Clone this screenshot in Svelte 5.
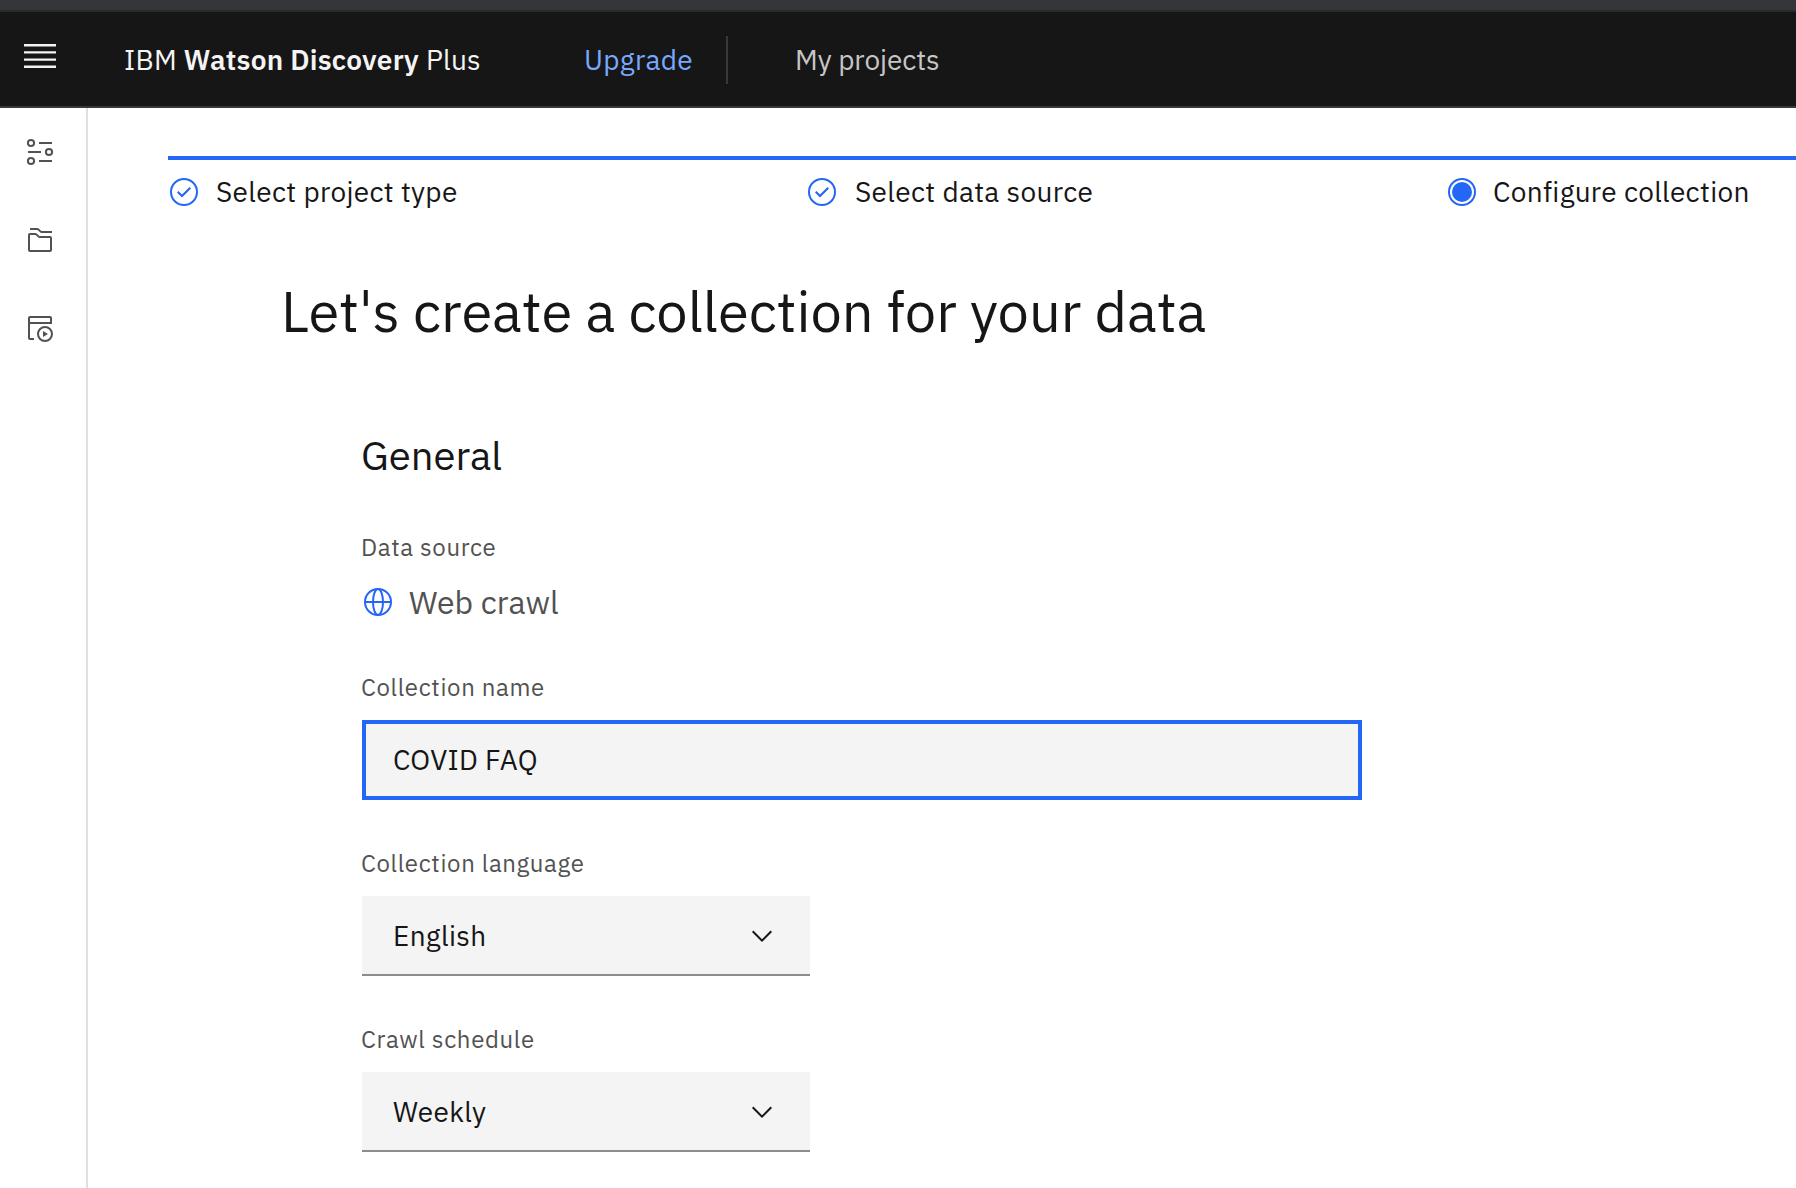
<script>
  const steps = [
    { label: 'Select project type', done: true },
    { label: 'Select data source', done: true },
    { label: 'Configure collection', done: false }
  ];
  const selects = [
    { label: 'Collection language', value: 'English' },
    { label: 'Crawl schedule', value: 'Weekly' }
  ];
  let name = $state('COVID FAQ');
</script>

<div class="page">
  <div class="strip"></div>
  <header>
    <button class="menu" aria-label="Open menu">
      <svg width="40" height="40" viewBox="0 0 20 20"><path d="M2 14.8H18V16H2zM2 11.2H18V12.4H2zM2 7.6H18V8.8H2zM2 4H18V5.2H2z" /></svg>
    </button>
    <div class="brand">IBM <b>Watson Discovery</b> Plus</div>
    <a class="upgrade" href="#upgrade">Upgrade</a>
    <span class="divider"></span>
    <a class="projects" href="#projects">My projects</a>
  </header>

  <div class="body">
    <nav>
      <svg width="32" height="32" viewBox="0 0 32 32">
        <circle cx="7" cy="7" r="3.1" /><circle cx="25" cy="16" r="3.1" /><circle cx="7" cy="25" r="3.1" />
        <path d="M15 7H28M4 16H17M15 25H28" />
      </svg>
      <svg width="32" height="32" viewBox="0 0 32 32">
        <path d="M6 5H13.2Q14 5 14.6 5.6L16.4 7.4Q17 8 17.8 8H28" />
        <path d="M6 10H11.2Q12 10 12.6 10.6L14.4 12.4Q15 13 15.8 13H26Q27 13 27 14V26Q27 27 26 27H6Q5 27 5 26V11Q5 10 6 10Z" />
      </svg>
      <svg width="32" height="32" viewBox="0 0 32 32">
        <path d="M10 27H6Q5 27 5 26V6Q5 5 6 5H26Q27 5 27 6V12M5 11H27" />
        <circle cx="21" cy="22" r="7" /><path class="solid" d="M19 19V25L24 22Z" />
      </svg>
    </nav>

    <main>
      <ol class="steps">
        {#each steps as step}
          <li>
            <svg width="32" height="32" viewBox="0 0 32 32">
              <circle class="ring" cx="16" cy="16" r="13" />
              {#if step.done}
                <path d="M14 21.414 9 16.413 10.413 15 14 18.586 21.585 11 23 12.415 14 21.414" />
              {:else}
                <circle cx="16" cy="16" r="10" />
              {/if}
            </svg>
            <span>{step.label}</span>
          </li>
        {/each}
      </ol>

      <h1>Let's create a collection for your data</h1>

      <section>
        <h2>General</h2>
        <div class="label">Data source</div>
        <div class="source">
          <svg width="32" height="32" viewBox="0 0 32 32">
            <circle cx="16" cy="16" r="13" /><ellipse cx="16" cy="16" rx="5" ry="13" /><path d="M3 16H29" />
          </svg>
          <span>Web crawl</span>
        </div>

        <label class="label" for="name">Collection name</label>
        <input id="name" bind:value={name} />

        {#each selects as field}
          <div class="label">{field.label}</div>
          <button class="select">
            <span>{field.value}</span>
            <svg width="32" height="32" viewBox="0 0 16 16"><path d="M8 11 3 6 3.7 5.3 8 9.6 12.3 5.3 13 6z" /></svg>
          </button>
        {/each}
      </section>
    </main>
  </div>
</div>

<style>
  :global(body) { margin: 0; background: #fff; }
  .page {
    height: 1188px;
    display: flex;
    flex-direction: column;
    overflow: hidden;
    font-family: 'IBM Plex Sans', Roboto, sans-serif;
    color: #161616;
    font-size: 28px;
  }
  .page * { box-sizing: border-box; }
  svg { display: block; flex: none; }
  button { border: 0; padding: 0; background: none; font: inherit; color: inherit; }

  .strip { flex: none; height: 12px; background: #35363a; border-bottom: 2px solid #292a2c; }
  header {
    flex: none;
    height: 96px;
    display: flex;
    align-items: center;
    padding: 2px 0 0 20px;
    background: #161616;
    border-bottom: 2px solid #393939;
    line-height: 36px;
    white-space: nowrap;
  }
  .menu { margin-bottom: 8px; fill: #f4f4f4; }
  .brand { width: 460px; margin-left: 64px; color: #f4f4f4; letter-spacing: 0.24px; }
  .brand b { font-weight: 600; }
  header a { text-decoration: none; }
  .upgrade { width: 142px; color: #78a9ff; letter-spacing: 0.32px; }
  .divider { width: 2px; height: 48px; background: #393939; }
  .projects { margin-left: 67px; color: #c6c6c6; letter-spacing: -0.06px; }

  .body { flex: 1; display: flex; min-height: 0; }
  nav {
    width: 88px;
    flex: none;
    display: flex;
    flex-direction: column;
    gap: 56px;
    padding: 28px 0 0 24px;
    border-right: 2px solid #e0e0e0;
  }
  nav svg { fill: none; stroke: #525252; stroke-width: 2; }
  nav .solid { fill: #525252; stroke: none; }

  main { flex: 1; min-width: 0; padding: 48px 0 0 80px; }
  .steps {
    display: grid;
    grid-template-columns: 638px 640px 1fr;
    margin: 0;
    padding: 14px 0 0;
    border-top: 4px solid #2466f5;
    list-style: none;
    line-height: 36px;
    letter-spacing: 0.32px;
  }
  .steps li { display: flex; align-items: flex-start; gap: 16px; }
  .steps li:nth-child(2) { gap: 17px; }
  .steps li:nth-child(3) { gap: 15px; }
  .steps svg { margin-top: 2px; fill: #2466f5; }
  .steps .ring { fill: none; stroke: #2466f5; stroke-width: 2; }

  h1 {
    margin: 69px 0 0 113px;
    font-size: 56px;
    line-height: 64px;
    font-weight: 400;
  }
  section { width: 1000px; margin: 88px 0 0 194px; }
  h2 { margin: 0 0 52px -1px; font-size: 40px; line-height: 48px; font-weight: 400; }
  .label {
    display: block;
    margin: 0 0 17px -1px;
    font-size: 24px;
    line-height: 32px;
    letter-spacing: 0.64px;
    color: #525252;
  }
  .source {
    display: flex;
    gap: 15px;
    height: 32px;
    margin: 23px 0 53px;
    font-size: 32px;
    line-height: 32px;
    color: #525252;
  }
  .source svg { fill: none; stroke: #2466f5; stroke-width: 2; }
  input, .select {
    display: flex;
    align-items: center;
    height: 80px;
    margin: 0 0 47px;
    background: #f4f4f4;
    font: inherit;
    letter-spacing: 0.32px;
    color: inherit;
  }
  input {
    width: 1000px;
    padding: 0 27px 1px;
    border: 4px solid #2466f5;
    border-radius: 0;
    outline: 0;
  }
  .select {
    width: 448px;
    justify-content: space-between;
    padding: 0 32px 0 31px;
    border-bottom: 2px solid #8d8d8d;
  }
  .select svg { margin-top: 2px; fill: #161616; }
</style>
